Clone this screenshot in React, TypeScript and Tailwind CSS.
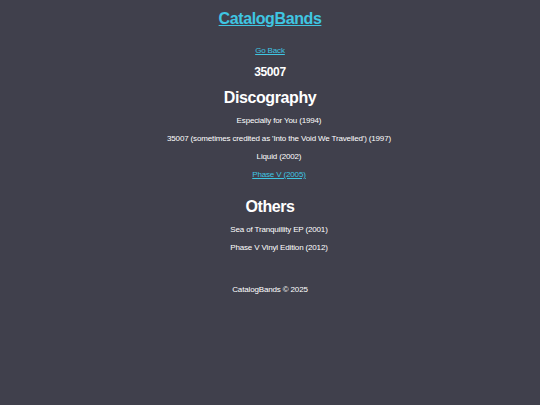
export default function App() {
  const discography = [
    { title: 'Especially for You (1994)' },
    { title: "35007 (sometimes credited as 'Into the Void We Travelled') (1997)" },
    { title: 'Liquid (2002)' },
    { title: 'Phase V (2005)', link: true },
  ];
  const others = ['Sea of Tranquillity EP (2001)', 'Phase V Vinyl Edition (2012)'];

  return (
    <div className="min-h-[405px] w-full bg-[#40404c] text-white font-['Liberation_Sans',Arial,sans-serif] flex flex-col items-center text-center">
      <header className="mt-[9px]">
        <a href="#" className="block text-[16px] leading-[20px] tracking-[-0.4px] font-bold text-[#3fc6e2] underline">CatalogBands</a>
      </header>

      <main className="flex flex-col items-center">
        <a href="#" className="mt-[17px] block text-[8px] leading-[10px] tracking-[-0.15px] text-[#3fc6e2] underline">Go Back</a>
        <h2 className="mt-[9px] text-[12px] leading-[14px] tracking-[-0.4px] font-bold">35007</h2>
        <h2 className="mt-[9px] text-[16px] leading-[20px] tracking-[-0.4px] font-bold">Discography</h2>
        <ul className="mt-[8px] pl-[18px] flex flex-col gap-[8px] text-[8px] leading-[10px] tracking-[-0.15px]">
          {discography.map((d) =>
            d.link ? (
              <li key={d.title}>
                <a href="#" className="text-[#3fc6e2] underline">{d.title}</a>
              </li>
            ) : (
              <li key={d.title}>{d.title}</li>
            )
          )}
        </ul>
        <h2 className="mt-[17px] text-[16px] leading-[20px] tracking-[-0.4px] font-bold">Others</h2>
        <ul className="mt-[8px] pl-[18px] flex flex-col gap-[8px] text-[8px] leading-[10px] tracking-[-0.15px]">
          {others.map((o) => (
            <li key={o}>{o}</li>
          ))}
        </ul>
      </main>

      <footer className="mt-[32px] text-[8px] leading-[10px] tracking-[-0.15px]">CatalogBands © 2025</footer>
    </div>
  );
}
